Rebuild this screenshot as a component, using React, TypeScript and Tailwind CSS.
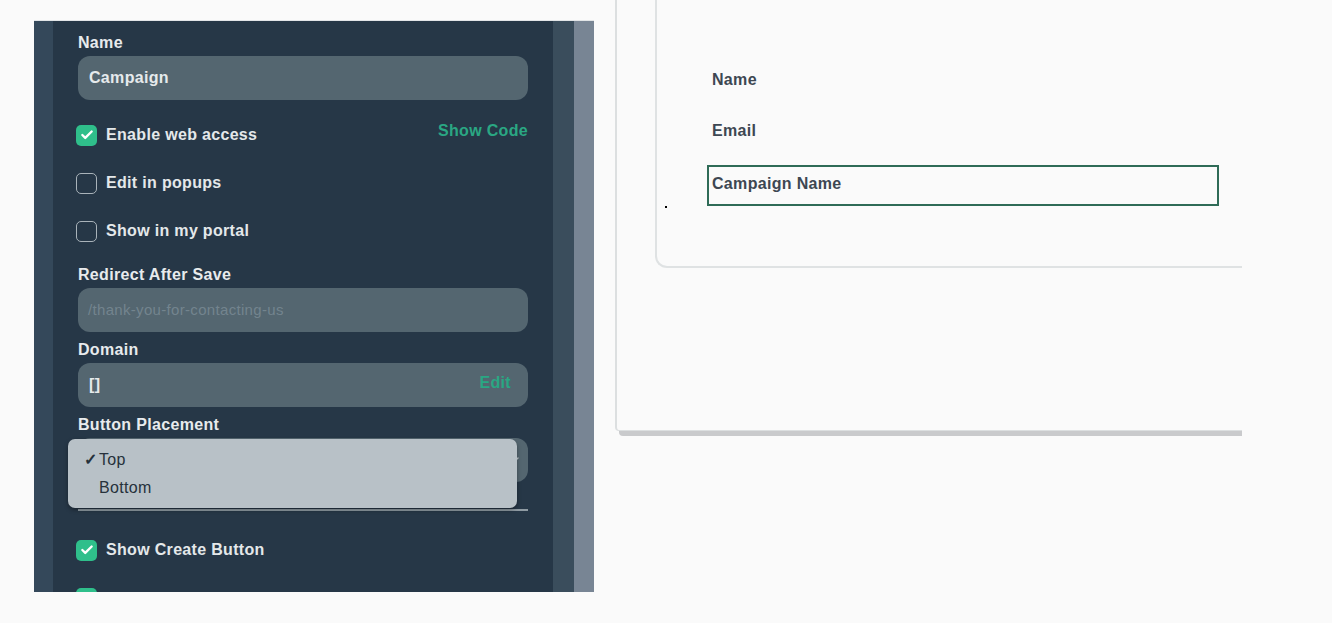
import { Check, ChevronDown } from "lucide-react";

const font = { fontFamily: '"Liberation Sans", Arial, sans-serif', letterSpacing: "0.02em" };

function Box({ checked }: { checked?: boolean }) {
  return checked ? (
    <span className="w-[21px] h-[21px] rounded-[5px] bg-[#2fbf8b] flex items-center justify-center shrink-0">
      <Check className="w-[14px] h-[14px] text-white" strokeWidth={4} />
    </span>
  ) : (
    <span className="w-[21px] h-[21px] rounded-[5px] border-[1.5px] border-[#a9b3ba] shrink-0" />
  );
}

function CheckRow({ label, checked, right }: { label?: string; checked?: boolean; right?: string }) {
  return (
    <div className="h-6 flex items-center gap-[9px] -ml-[2px]">
      <Box checked={checked} />
      <span className="text-[16px] font-bold text-[#e4e8ea] flex-1">{label}</span>
      {right && <span className="text-[16px] font-bold text-[#2aa783] -mt-[8px]">{right}</span>}
    </div>
  );
}

function Label({ children }: { children: string }) {
  return <div className="h-5 leading-5 text-[16px] font-bold text-[#e8ebed]">{children}</div>;
}

export default function App() {
  return (
    <div className="w-[1332px] h-[623px] bg-[#fafafa] flex overflow-hidden" style={font}>
      {/* settings panel */}
      <div className="ml-[34px] mt-[20px] w-[560px] h-[572px] flex border-t border-[#e2e5e7] overflow-hidden">
        <div className="w-[19px] bg-[#34485a]" />
        <div className="w-[500px] bg-[#263747] px-[25px] pt-[12px] relative">
          <Label>Name</Label>
          <div className="mt-[3px] h-[44px] rounded-[12px] bg-[#546670] flex items-center px-[11px] text-[16px] font-bold text-[#e6eaec]">
            Campaign
          </div>

          <div className="mt-[23px] flex flex-col gap-[24px]">
            <CheckRow label="Enable web access" checked right="Show Code" />
            <CheckRow label="Edit in popups" />
            <CheckRow label="Show in my portal" />
          </div>

          <div className="mt-[22px]">
            <Label>Redirect After Save</Label>
          </div>
          <div className="mt-[3px] h-[44px] rounded-[12px] bg-[#546670] flex items-center px-[10px] text-[15px] text-[#73848e]">
            /thank-you-for-contacting-us
          </div>

          <div className="mt-[8px]">
            <Label>Domain</Label>
          </div>
          <div className="mt-[3px] h-[44px] rounded-[12px] bg-[#546670] flex items-center px-[11px] text-[16px] font-bold text-[#e6eaec]">
            <span className="flex-1">[]</span>
            <span className="text-[#2aa783] mr-[6px] -mt-[4px]">Edit</span>
          </div>

          <div className="mt-[8px]">
            <Label>Button Placement</Label>
          </div>
          <div className="mt-[3px] h-[73px] border-b-2 border-[#8f9ba3]">
            <div className="h-[44px] rounded-[12px] bg-[#546670] flex items-center justify-end px-[6px]">
              <ChevronDown className="w-4 h-4 text-[#c4ccd1]" />
            </div>
          </div>

          {/* open select menu */}
          <div className="absolute left-[15px] top-[418px] w-[449px] h-[69px] rounded-[7px] bg-[#b8c1c7] shadow-[0_2px_4px_rgba(0,0,0,0.35)] pt-[10px] text-[16px] text-[#26313b]">
            <div className="h-[21px] flex items-center">
              <span className="w-[31px] text-right pr-[2px] font-bold">✓</span>
              <span>Top</span>
            </div>
            <div className="h-[21px] mt-[7px] flex items-center pl-[31px]">Bottom</div>
          </div>

          <div className="mt-[27px] flex flex-col gap-[24px]">
            <CheckRow label="Show Create Button" checked />
            <CheckRow checked />
          </div>
        </div>
        <div className="w-[21px] bg-[#3a4d5c]" />
        <div className="w-[20px] bg-[#788594]" />
      </div>

      {/* preview */}
      <div className="ml-[21px] w-[627px] h-[440px] overflow-hidden">
        <div className="h-[431px] border-l-2 border-b border-[#dcdfe0] rounded-bl-[4px] bg-[#fafafa] shadow-[4px_5px_0_#c9cacc]">
          <div className="ml-[38px] h-[268px] border-l-2 border-b-2 border-[#dfe2e3] rounded-bl-[12px] pl-[55px] pt-[70px] relative">
            <div className="h-5 leading-5 text-[16px] font-bold text-[#3d4752]">Name</div>
            <div className="mt-[31px] h-5 leading-5 text-[16px] font-bold text-[#3d4752]">Email</div>
            <div className="mt-[24px] -ml-[5px] w-[512px] h-[41px] border-2 border-[#2f6b57] pl-[3px] pt-[5px] text-[16px] font-bold text-[#3d4752]">
              Campaign Name
            </div>
            <span className="absolute left-[8px] top-[206px] w-[2px] h-[2px] bg-black" />
          </div>
        </div>
      </div>
    </div>
  );
}
